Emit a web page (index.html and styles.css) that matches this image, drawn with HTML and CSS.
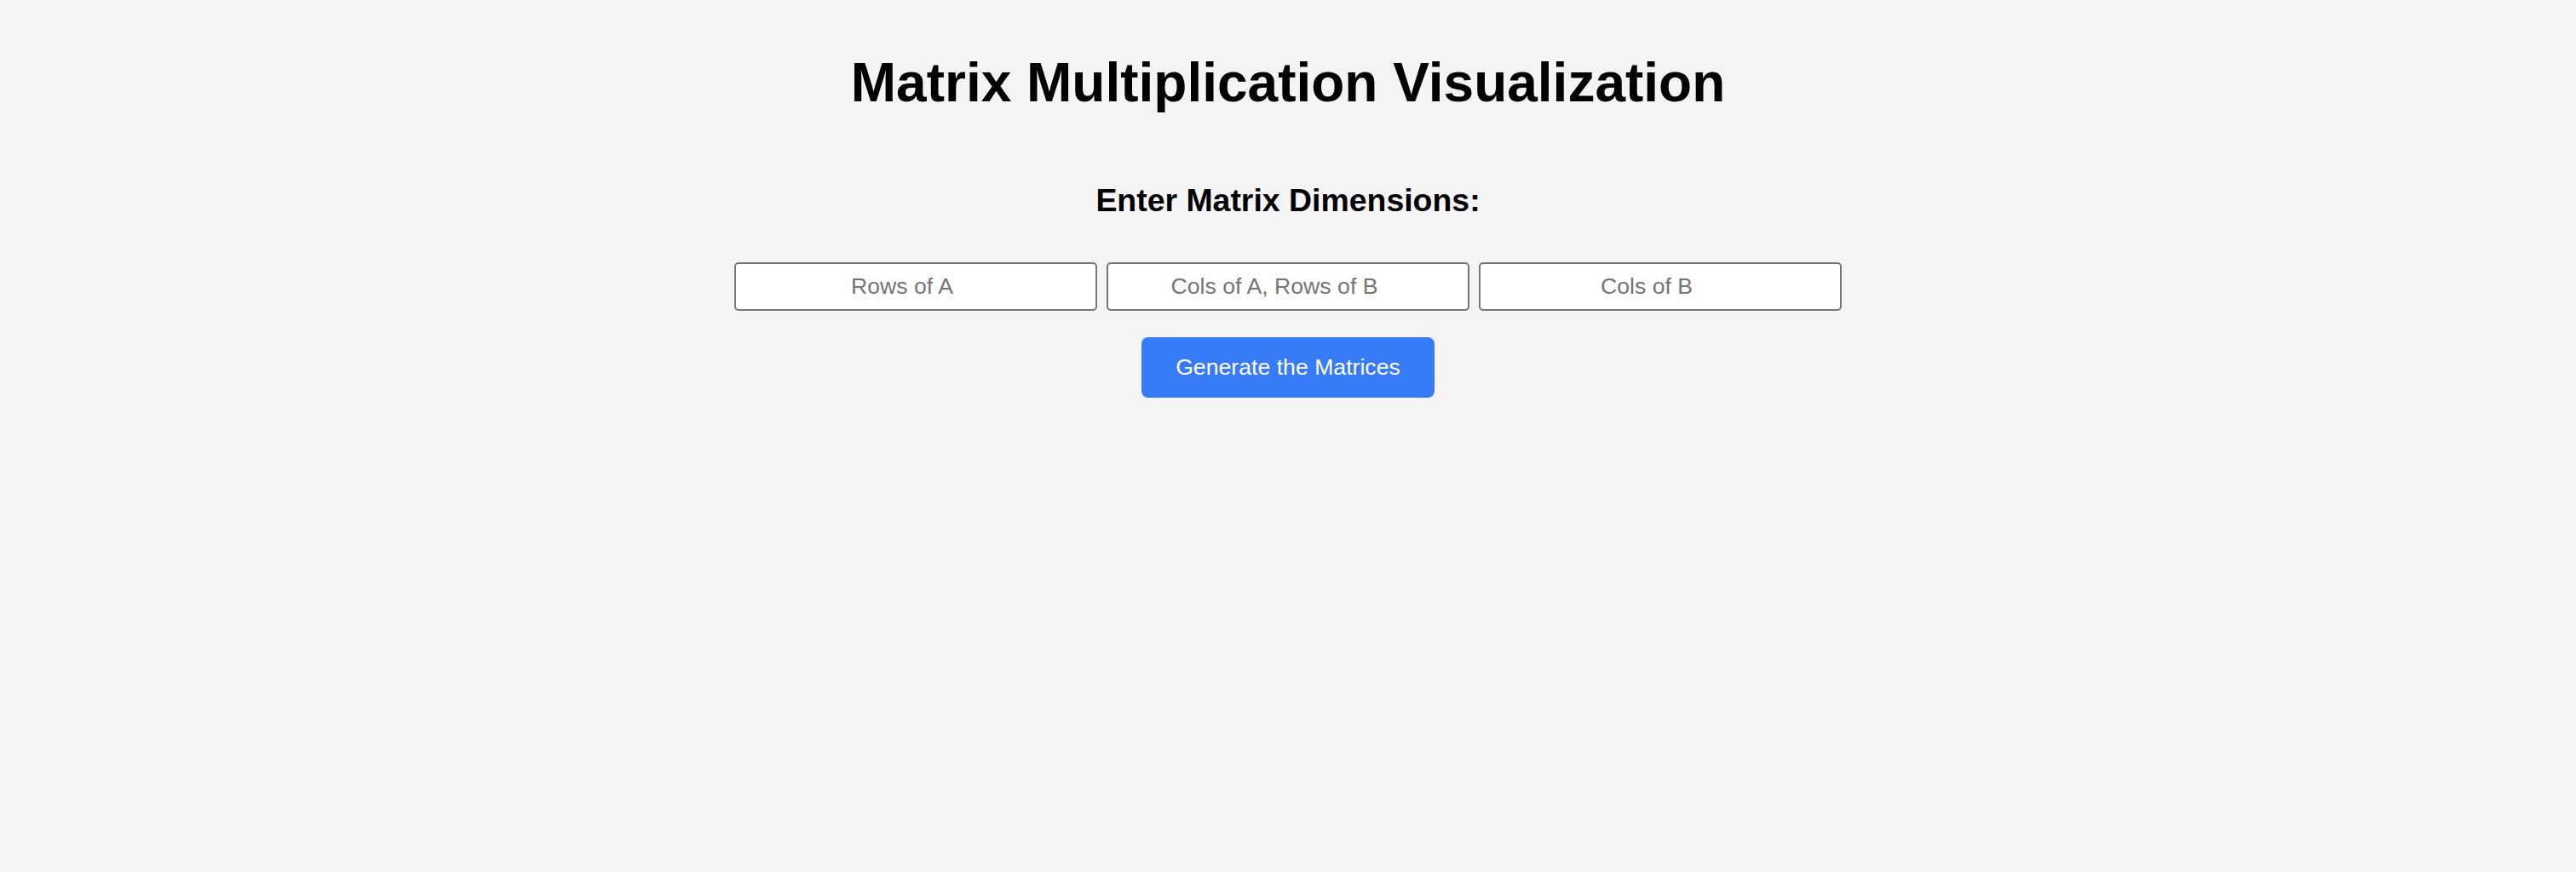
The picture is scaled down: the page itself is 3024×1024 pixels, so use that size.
FILE: index.html
```html
<!DOCTYPE html>
<html lang="en">
<head>
<meta charset="utf-8">
<title>Matrix Multiplication Visualization</title>
<link rel="stylesheet" href="styles.css">
</head>
<body>
  <main class="page">
    <h1 class="title">Matrix Multiplication Visualization</h1>
    <h3 class="subtitle">Enter Matrix Dimensions:</h3>
    <div class="inputs">
      <input class="dim" type="number" placeholder="Rows of A">
      <input class="dim" type="number" placeholder="Cols of A, Rows of B">
      <input class="dim" type="number" placeholder="Cols of B">
    </div>
    <button class="generate" type="button">Generate the Matrices</button>
  </main>
</body>
</html>
```

FILE: styles.css
```css
html, body {
  margin: 0;
  padding: 0;
  background: #f4f4f4;
  height: 100%;
}

body {
  font-family: "Liberation Sans", Arial, sans-serif;
  color: #000;
}

.page {
  display: flex;
  flex-direction: column;
  align-items: center;
  padding-top: 60px;
}

.title {
  margin: 0;
  font-size: 64px;
  line-height: 74px;
  font-weight: 700;
}

.subtitle {
  margin: 80px 0 0;
  font-size: 37.44px;
  line-height: 43px;
  font-weight: 700;
}

.inputs {
  display: flex;
  gap: 11px;
  margin-top: 51px;
}

.dim {
  box-sizing: border-box;
  width: 426px;
  height: 57px;
  border: 2px solid #767676;
  border-radius: 5px;
  background: #fff;
  font-family: "Liberation Sans", Arial, sans-serif;
  font-size: 26.67px;
  text-align: center;
  padding: 0 36px 0 4px;
  color: #000;
  -moz-appearance: textfield;
}

.dim::-webkit-outer-spin-button,
.dim::-webkit-inner-spin-button {
  -webkit-appearance: none;
  margin: 0;
}

.dim::placeholder {
  color: #757575;
}

.generate {
  margin-top: 31px;
  padding: 0 40px;
  height: 71px;
  border: none;
  border-radius: 8px;
  background: #377bf6;
  color: #fff;
  font-family: "Liberation Sans", Arial, sans-serif;
  font-size: 26.67px;
  cursor: pointer;
}
```
